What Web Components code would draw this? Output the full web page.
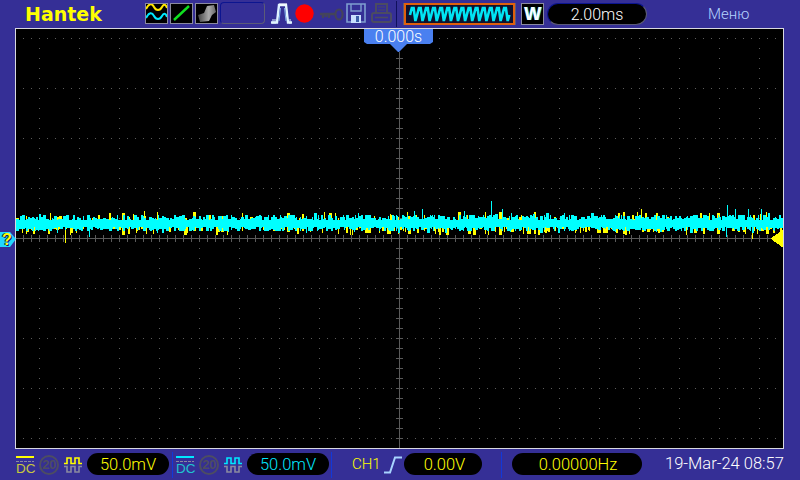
<!DOCTYPE html>
<html lang="ru">
<head>
<meta charset="utf-8">
<title>Hantek</title>
<style>
    html, body { margin: 0; padding: 0; background: #352f96; }
</style>
</head>
<body>
<hantek-scope></hantek-scope>

<script>
const FONT = '"Liberation Sans", Arial, sans-serif';
const THIN = 'Roboto, "Liberation Sans", sans-serif';

class ScopePill extends HTMLElement {
    connectedCallback() {
        const raised = this.hasAttribute("raised");
        this.attachShadow({ mode: "open" }).innerHTML = `
            <style>
                :host {
                    display: flex;
                    align-items: center;
                    justify-content: center;
                    box-sizing: border-box;
                    height: 22px;
                    border-radius: 11px;
                    background: #000;
                    font: 300 16.5px ${THIN};
                    ${raised ? "border: 1px solid #5b5b78; border-top-color: #0c1590; border-left-color: #0c1590; font-size: 16px;" : ""}
                }
            </style>
            <slot></slot>
        `;
    }
}

class ToolBar extends HTMLElement {
    connectedCallback() {
        let zig = "M7 12";
        for (let i = 0; i < 14; i++) {
            const x = 7 + i * 7.1;
            zig += ` L${x + 1.8} 5 L${x + 3.6} 5 L${x + 5.4} 18 L${x + 7.1} 12`;
        }
        this.attachShadow({ mode: "open" }).innerHTML = `
            <style>
                :host {
                    display: flex;
                    align-items: flex-start;
                    height: 28px;
                    padding-top: 3px;
                    box-sizing: border-box;
                    font-family: ${FONT};
                }
                svg { display: block; flex: none; }
                .logo {
                    width: 120px;
                    margin-left: 25px;
                    font: bold 19px/22px "DejaVu Sans", sans-serif;
                    color: #ffff00;
                }
                .btn {
                    box-sizing: border-box;
                    width: 23px;
                    height: 21px;
                    margin-right: 2px;
                    border: 1px solid #8a8aa0;
                    background: #000;
                }
                .blank {
                    box-sizing: border-box;
                    width: 45px;
                    height: 22px;
                    margin-top: -1px;
                    border: 1px solid #5b5b78;
                    border-top-color: #0c1590;
                    border-left-color: #0c1590;
                    border-radius: 4px;
                }
                .sep {
                    width: 1px;
                    height: 26px;
                    margin: -2px 6px 0 4px;
                    background: #10105c;
                }
                .w {
                    box-sizing: border-box;
                    width: 23px;
                    height: 22px;
                    margin: 0 3px 0 5px;
                    border: 1px solid #8a8aa0;
                    background: #000;
                    color: #fff;
                    font: bold 18px/20px ${FONT};
                    text-align: center;
                    text-shadow: 1px 0 #40e0f0;
                }
                .time { width: 100px; color: #fff; }
                .menu {
                    margin-left: 61px;
                    font: 300 15px/22px ${THIN};
                    color: #b4d4ff;
                }
            </style>
            <div class="logo">Hantek</div>
            <div class="btn">
                <svg width="21" height="19" viewBox="0 0 21 19" fill="none" stroke-width="2">
                    <path d="M0 5 C3 -1 6 -1 8 3 S14 7 16 3 S20 1 21 4" stroke="#ffe600"/>
                    <path d="M0 14 C3 8 6 8 8 12 S14 16 16 12 S20 10 21 13" stroke="#00e8ff"/>
                </svg>
            </div>
            <div class="btn">
                <svg width="21" height="19" viewBox="0 0 21 19">
                    <path d="M3 16 L18 2" stroke="#10e020" stroke-width="2.4" fill="none"/>
                </svg>
            </div>
            <div class="btn">
                <svg width="21" height="19" viewBox="0 0 21 19">
                    <defs>
                        <linearGradient id="g" x1="0" y1="0" x2="1" y2="0">
                            <stop offset="0" stop-color="#444"/>
                            <stop offset=".6" stop-color="#aaa"/>
                            <stop offset="1" stop-color="#666"/>
                        </linearGradient>
                    </defs>
                    <path d="M2 11 L8 9 L11 2 L18 1 L20 8 L16 11 L13 17 L4 18 Z" fill="url(#g)"/>
                </svg>
            </div>
            <div class="blank"></div>
            <svg style="margin-left:6px" width="21" height="21" viewBox="0 0 21 21" fill="none">
                <path d="M0 19.5 H6 L8 2 H15 L17 19.5 H21" stroke="#dff4ff" stroke-width="2.4"/>
                <path d="M9 0 V3 M11 0 V3 M13 0 V3 M15 0 V3" stroke="#fff" stroke-width="1"/>
                <path d="M2 16 V21 M4 16 V21 M19 16 V21" stroke="#dff4ff" stroke-width="1"/>
                <path d="M9.5 5 L8 18 M13.5 5 L15 18" stroke="#7fb0e8" stroke-width="1"/>
            </svg>
            <svg style="margin-left:3px;margin-top:1px" width="19" height="19" viewBox="0 0 19 19">
                <circle cx="9.5" cy="9.5" r="9.2" fill="#ff0000"/>
            </svg>
            <svg style="margin-left:6px;margin-top:5px" width="24" height="13" viewBox="0 0 24 13" fill="none">
                <path d="M0 6 H15 M3 6 V10 M6 6 V9 M9 6 V10" stroke="#44445a" stroke-width="2.4"/>
                <ellipse cx="19" cy="6.5" rx="3.6" ry="5" stroke="#44445a" stroke-width="2.2"/>
            </svg>
            <svg style="margin-left:2px" width="20" height="20" viewBox="0 0 20 20" fill="none">
                <path d="M1 1 H19 V19 H1 Z" stroke="#7f9fd0" stroke-width="1.6"/>
                <path d="M5 1 V8 H15 V1" stroke="#7f9fd0" stroke-width="1.4"/>
                <rect x="5" y="12" width="10" height="8" fill="#c8e0ff"/>
                <rect x="10" y="13" width="3" height="6" fill="#3a5fa8"/>
            </svg>
            <svg style="margin-left:5px" width="21" height="20" viewBox="0 0 21 20" fill="none" stroke="#4b4b62" stroke-width="2">
                <path d="M5 10 V1 H16 V10"/>
                <path d="M7 4 H14 M7 7 H14" stroke-width="1"/>
                <rect x="1" y="10" width="19" height="9" rx="2"/>
                <path d="M4 14.5 H17" stroke-width="1.6"/>
            </svg>
            <div class="sep"></div>
            <svg width="113" height="22" viewBox="0 0 113 22" fill="none">
                <path d="M0 0 H2 V22 H0 M113 0 H111 V22 H113" fill="#5b5b78"/>
                <rect x="2" y="1" width="109" height="20" fill="#10122e" stroke="#e0600c" stroke-width="2"/>
                <path d="${zig}" stroke="#00e4f4" stroke-width="2.6"/>
            </svg>
            <div class="w">W</div>
            <scope-pill class="time" raised>2.00ms</scope-pill>
            <div class="menu">Меню</div>
        `;
    }
}

class ScopeScreen extends HTMLElement {
    connectedCallback() {
        const grid = [];
        const axis = [];
        // строки сетки: точки каждые 8 px, колонки: точки каждые 10 px
        for (let y = 38; y <= 438; y += 50) {
            for (let x = 23; x <= 775; x += 8) grid.push(`M${x} ${y}h1v1h-1z`);
        }
        for (let x = 39; x <= 759; x += 40) {
            for (let y = 38; y <= 438; y += 10) grid.push(`M${x} ${y}h1v1h-1z`);
        }
        for (let x = 23; x <= 775; x += 8) axis.push(`M${x + .5} 235V242`);
        for (let y = 58; y <= 438; y += 10) axis.push(`M396 ${y + .5}H403`);

        // псевдослучайный шум, чтобы картинка была одинаковой
        let seed = 24357;
        const rnd = () => {
            seed = (seed * 16807) % 2147483647;
            return seed / 2147483647;
        };
        const yellow = [];
        const cyan = [];
        const band = (list, x, top, bot) => {
            // шум идёт кусками в 1-3 px
            const w = 1 + (rnd() * 2.4 | 0);
            for (let i = 0; i < w; i++) {
                if (x + i < 783) list.push(`M${x + i + .5} ${top | 0}V${bot | 0}`);
            }
            return w;
        };
        for (let x = 16; x < 783;) {
            const up = rnd() < .35 ? 212 + rnd() * 8 : 220;
            const down = 224 + rnd() * 12;
            x += band(yellow, x, up, down) + (rnd() < .6 ? 1 + (rnd() * 3 | 0) : 0);
        }
        for (let x = 16; x < 783;) {
            const top = 221 - rnd() * 6 - (rnd() < .1 ? 2 : 0);
            const bot = 227 + rnd() * 5 + (rnd() < .1 ? 2 : 0);
            x += band(cyan, x, top, bot);
        }
        const spikes = (list, pts) => pts.forEach(p => list.push(`M${p[0] + .5} ${p[1]}V${p[2]}`));
        spikes(cyan, [[491, 201, 222], [502, 209, 222], [422, 209, 222], [414, 211, 222], [464, 211, 222],
            [727, 205, 222], [726, 225, 237], [735, 209, 222], [761, 209, 222], [748, 209, 222], [89, 225, 237]]);
        spikes(yellow, [[641, 209, 222], [752, 226, 239], [144, 211, 222], [65, 226, 243], [133, 214, 222]]);

        this.attachShadow({ mode: "open" }).innerHTML = `
            <style>
                :host {
                    display: block;
                    position: relative;
                    box-sizing: border-box;
                    width: 769px;
                    height: 421px;
                    margin-left: 15px;
                    border: 1px solid #d8d8e0;
                    background: #000;
                }
                svg { display: block; }
                .stamp {
                    position: absolute;
                    left: 348px;
                    top: 0;
                    width: 69px;
                    height: 23px;
                    background: #4a80f0;
                    clip-path: polygon(0 0, 100% 0, 100% 13px, 66px 15px, 43px 15px, 35px 23px, 34px 23px, 26px 15px, 3px 15px, 0 13px);
                    color: #fff;
                    font: 300 16px/15px ${THIN};
                    text-align: center;
                }
                .mark {
                    position: absolute;
                    left: -16px;
                    top: 203px;
                    width: 16px;
                    height: 15px;
                    background: #22d8ff;
                    clip-path: polygon(0 0, 10px 0, 16px 7px, 10px 15px, 0 15px);
                    color: #ffff00;
                    font: bold 16px/15px ${FONT};
                    text-shadow: 1px 1px #10106a, -1px 0 #10106a;
                    text-indent: 2px;
                }
            </style>
            <svg width="767" height="419" viewBox="16 29 767 419" shape-rendering="crispEdges">
                <path d="${grid.join("")}" fill="#5c5c5c"/>
                <path d="M16 238.5H783 M399.5 52V448" stroke="#5a5a5a" fill="none"/>
                <path d="${axis.join("")}" stroke="#5a5a5a" fill="none"/>
                <path d="${yellow.join("")}" stroke="#ffff00" fill="none"/>
                <path d="${cyan.join("")}" stroke="#00ffff" fill="none"/>
                <path d="M783 230 V247 H782 L771 239 V238 Z" fill="#ffff00"/>
            </svg>
            <div class="stamp">0.000s</div>
            <div class="mark">?</div>
        `;
    }
}

class ChannelGroup extends HTMLElement {
    connectedCallback() {
        const c = this.getAttribute("color");
        const dim = this.getAttribute("dim");
        this.attachShadow({ mode: "open" }).innerHTML = `
            <style>
                :host {
                    display: flex;
                    align-items: flex-start;
                    font-family: ${FONT};
                }
                .dc { width: 18px; margin-top: 3px; }
                .dc i { display: block; height: 2px; background: ${c}; }
                .dc u {
                    display: block;
                    height: 1px;
                    margin-top: 3px;
                    background: repeating-linear-gradient(90deg, #8a8aa0 0 3px, transparent 3px 4px);
                }
                .dc b {
                    display: block;
                    margin-top: 1px;
                    font: 13.5px/12px ${FONT};
                    color: ${dim};
                    text-align: center;
                }
                .bw {
                    box-sizing: border-box;
                    width: 20px;
                    height: 20px;
                    margin: 2px 5px 0 5px;
                    border: 2px solid #4d4d62;
                    border-radius: 50%;
                    color: #4d4d62;
                    font: bold 13px/16px ${FONT};
                    letter-spacing: -.5px;
                    text-align: center;
                }
                svg { display: block; margin-top: 4px; margin-right: 5px; flex: none; }
                scope-pill { width: 82px; color: ${c}; }
            </style>
            <div class="dc"><i></i><u></u><b>DC</b></div>
            <div class="bw">20</div>
            <svg width="18" height="16" viewBox="0 0 18 16" fill="none" stroke-width="1.6">
                <path d="M0 6.5 H3 V1 H7 V6.5 H11 V1 H15 V6.5 H18" stroke="${c}"/>
                <path d="M0 9.5 H3 V15 H7 V9.5 H11 V15 H15 V9.5 H18" stroke="#8a8aa0"/>
            </svg>
            <scope-pill><slot></slot></scope-pill>
        `;
    }
}

class StatusBar extends HTMLElement {
    connectedCallback() {
        this.attachShadow({ mode: "open" }).innerHTML = `
            <style>
                :host {
                    display: flex;
                    align-items: flex-start;
                    height: 31px;
                    padding: 4px 0 0 16px;
                    box-sizing: border-box;
                    font-family: ${FONT};
                }
                .sep {
                    width: 1px;
                    height: 26px;
                    margin-top: -1px;
                    background: #1238d8;
                    flex: none;
                }
                .src {
                    margin: 0 3px 0 20px;
                    font: 300 15px/22px ${THIN};
                    color: #ffff00;
                    width: 29px;
                }
                svg { display: block; flex: none; margin: 3px 2px 0 0; }
                .level { width: 78px; color: #ffff00; padding-left: 3px; }
                .freq { width: 130px; color: #ffff00; margin-left: 10px; padding-left: 2px; }
                .date {
                    margin-left: 23px;
                    font: 300 16.5px/22px ${THIN};
                    color: #fff;
                    white-space: nowrap;
                }
            </style>
            <channel-group color="#ffff00" dim="#c8c83c">50.0mV</channel-group>
            <div class="sep" style="margin-left:3px;margin-right:3px"></div>
            <channel-group color="#00e8ff" dim="#20c4d0">50.0mV</channel-group>
            <div class="sep" style="margin-left:2px"></div>
            <div class="src">CH1</div>
            <svg width="18" height="18" viewBox="0 0 18 18" fill="none">
                <path d="M0 16.5 H6 L11 1.5 H18" stroke="#a8d4ff" stroke-width="2"/>
            </svg>
            <scope-pill class="level">0.00V</scope-pill>
            <div class="sep" style="margin-left:19px"></div>
            <scope-pill class="freq">0.00000Hz</scope-pill>
            <div class="date">19-Mar-24 08:57</div>
        `;
    }
}

class HantekScope extends HTMLElement {
    connectedCallback() {
        this.attachShadow({ mode: "open" }).innerHTML = `
            <style>
                :host {
                    display: block;
                    width: 800px;
                    height: 480px;
                    overflow: hidden;
                    background: #352f96;
                }
            </style>
            <tool-bar></tool-bar>
            <scope-screen></scope-screen>
            <status-bar></status-bar>
        `;
    }
}

customElements.define("scope-pill", ScopePill);
customElements.define("tool-bar", ToolBar);
customElements.define("scope-screen", ScopeScreen);
customElements.define("channel-group", ChannelGroup);
customElements.define("status-bar", StatusBar);
customElements.define("hantek-scope", HantekScope);
</script>
</body>
</html>
